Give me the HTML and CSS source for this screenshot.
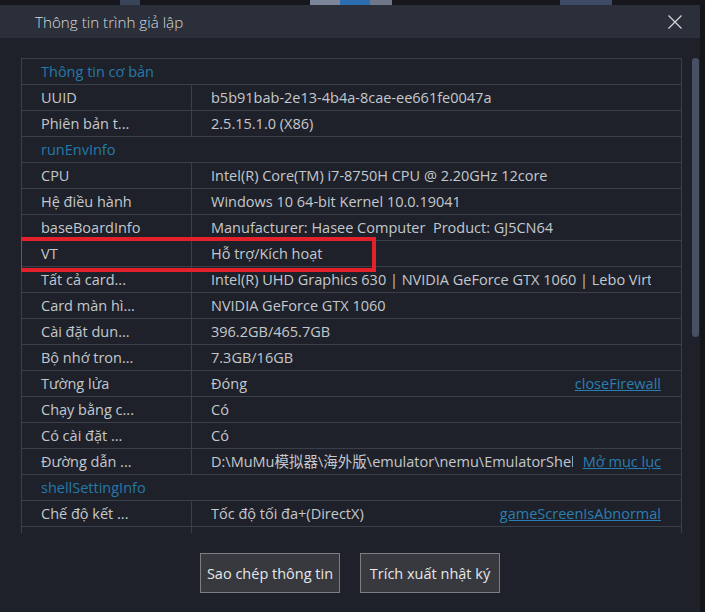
FILE: index.html
```html
<!DOCTYPE html>
<html lang="vi">
<head>
    <meta charset="UTF-8">
    <meta name="viewport" content="width=device-width, initial-scale=1.0">
    <link rel="stylesheet" href="styles.css">
</head>
<body>

    <div class="dialog">
        <div class="dialog-header">
            <span class="dialog-title">Thông tin trình giả lập</span>
            <svg class="close-btn" width="14" height="14" viewBox="0 0 14 14">
                <path d="M0.5 0.5 L13.5 13.5 M13.5 0.5 L0.5 13.5" stroke="#d4d7dc" stroke-width="1.2" fill="none"/>
            </svg>
        </div>

        <div class="dialog-body">
            <div class="info-wrap">
                <div class="info-table">
                    <!-- basic info -->
                    <div class="row section"><span>Thông tin cơ bản</span></div>
                    <div class="row"><div class="key">UUID</div><div class="value"><span class="val">b5b91bab-2e13-4b4a-8cae-ee661fe0047a</span></div></div>
                    <div class="row"><div class="key">Phiên bản t...</div><div class="value"><span class="val">2.5.15.1.0 (X86)</span></div></div>

                    <!-- runtime environment -->
                    <div class="row section"><span>runEnvInfo</span></div>
                    <div class="row"><div class="key">CPU</div><div class="value"><span class="val">Intel(R) Core(TM) i7-8750H CPU @ 2.20GHz 12core</span></div></div>
                    <div class="row"><div class="key">Hệ điều hành</div><div class="value"><span class="val">Windows 10 64-bit Kernel 10.0.19041</span></div></div>
                    <div class="row"><div class="key">baseBoardInfo</div><div class="value"><span class="val">Manufacturer: Hasee Computer&nbsp; Product: GJ5CN64</span></div></div>
                    <div class="row marked">
                        <div class="key">VT</div><div class="value"><span class="val">Hỗ trợ/Kích hoạt</span></div>
                        <div class="mark"></div>
                    </div>
                    <div class="row"><div class="key">Tất cả card...</div><div class="value"><span class="val">Intel(R) UHD Graphics 630 | NVIDIA GeForce GTX 1060 | Lebo Virtual Display Adapter</span></div></div>
                    <div class="row"><div class="key">Card màn hì...</div><div class="value"><span class="val">NVIDIA GeForce GTX 1060</span></div></div>
                    <div class="row"><div class="key">Cài đặt dun...</div><div class="value"><span class="val">396.2GB/465.7GB</span></div></div>
                    <div class="row"><div class="key">Bộ nhớ tron...</div><div class="value"><span class="val">7.3GB/16GB</span></div></div>
                    <div class="row"><div class="key">Tường lửa</div><div class="value"><span class="val">Đóng</span><a class="action">closeFirewall</a></div></div>
                    <div class="row"><div class="key">Chạy bằng c...</div><div class="value"><span class="val">Có</span></div></div>
                    <div class="row"><div class="key">Có cài đặt ...</div><div class="value"><span class="val">Có</span></div></div>
                    <div class="row"><div class="key">Đường dẫn ...</div><div class="value"><span class="val">D:\MuMu模拟器\海外版\emulator\nemu\EmulatorShell</span><a class="action">Mở mục lục</a></div></div>

                    <!-- shell settings -->
                    <div class="row section"><span>shellSettingInfo</span></div>
                    <div class="row"><div class="key">Chế độ kết ...</div><div class="value"><span class="val">Tốc độ tối đa+(DirectX)</span><a class="action">gameScreenIsAbnormal</a></div></div>
                    <div class="row"><div class="key"></div><div class="value"></div></div>
                </div>
            </div>
            <div class="scrollbar"><div class="thumb"></div></div>
        </div>

        <div class="dialog-footer">
            <button class="btn">Sao chép thông tin</button>
            <button class="btn">Trích xuất nhật ký</button>
        </div>
    </div>

</body>
</html>
```

FILE: styles.css
```css
body {
    margin: 0;
    padding: 0;
    width: 705px;
    height: 612px;
    overflow: hidden;
    font-family: 'Open Sans', 'Noto Sans CJK SC', sans-serif;
    background-color: #131519;
    /* bits of the window behind the dialog */
    background-image: linear-gradient(90deg,
        #15171c 0, #15171c 120px, #3a4458 120px, #3a4458 140px,
        #15171c 140px, #15171c 310px, #7c8699 310px, #7c8699 340px,
        #2b6fb0 340px, #2b6fb0 370px, #6f7789 370px, #6f7789 392px,
        #15171c 392px, #15171c 560px, #3d4b66 560px, #3d4b66 612px,
        #15171c 612px);
    background-size: 100% 5px;
    background-repeat: no-repeat;
}

.dialog {
    width: 700px;
    height: 607px;
    margin-top: 5px;
    background-color: #1e2129;
    overflow: hidden;
}

.dialog-header {
    height: 33px;
    background-color: #2b2f39;
    display: flex;
    align-items: center;
    justify-content: space-between;
    padding: 0 18px 0 35px;
}

.dialog-title {
    color: #d5d8dd;
    font-size: 15.2px;
    font-weight: 300;
}

.close-btn {
    display: block;
    margin-top: 1px;
}

.dialog-body {
    display: flex;
    padding: 20px 0 0 21px;
}

.info-wrap {
    width: 661px;
    height: 475px;
    overflow: hidden;
}

.info-table {
    border: 1px solid #3a3f4a;
    border-bottom: none;
    color: #c4c8ce;
    font-size: 14.5px;
}

.row {
    display: flex;
    height: 25px;
    line-height: 25px;
    border-bottom: 1px solid #3a3f4a;
    white-space: nowrap;
}

.row.section {
    padding-left: 19px;
    color: #2579a9;
}

.row.marked {
    position: relative;
}

.key {
    width: 150px;
    padding-left: 19px;
    border-right: 1px solid #3a3f4a;
    overflow: hidden;
}

.value {
    flex: 1;
    min-width: 0;
    display: flex;
    padding: 0 20px 0 19px;
}

.val {
    flex: 1;
    min-width: 0;
    overflow: hidden;
    margin-right: 10px;
}

.action {
    color: #2a7fb2;
    text-decoration: underline;
    cursor: pointer;
}

/* red highlight around the VT row */
.mark {
    position: absolute;
    left: -4px;
    top: -4px;
    width: 350px;
    height: 27px;
    border: 4px solid #e3212b;
}

.scrollbar {
    width: 7px;
    height: 475px;
    margin-left: 10px;
}

.thumb {
    height: 279px;
    border-radius: 4px;
    background-color: #485063;
}

.dialog-footer {
    display: flex;
    justify-content: center;
    gap: 20px;
    margin-top: 20px;
}

.btn {
    width: 140px;
    height: 40px;
    padding: 0;
    font-family: 'Open Sans', sans-serif;
    font-size: 14.5px;
    color: #e6e7e9;
    background-color: #37393f;
    border: 1px solid #7b7e85;
    border-radius: 0;
    cursor: pointer;
}
```
